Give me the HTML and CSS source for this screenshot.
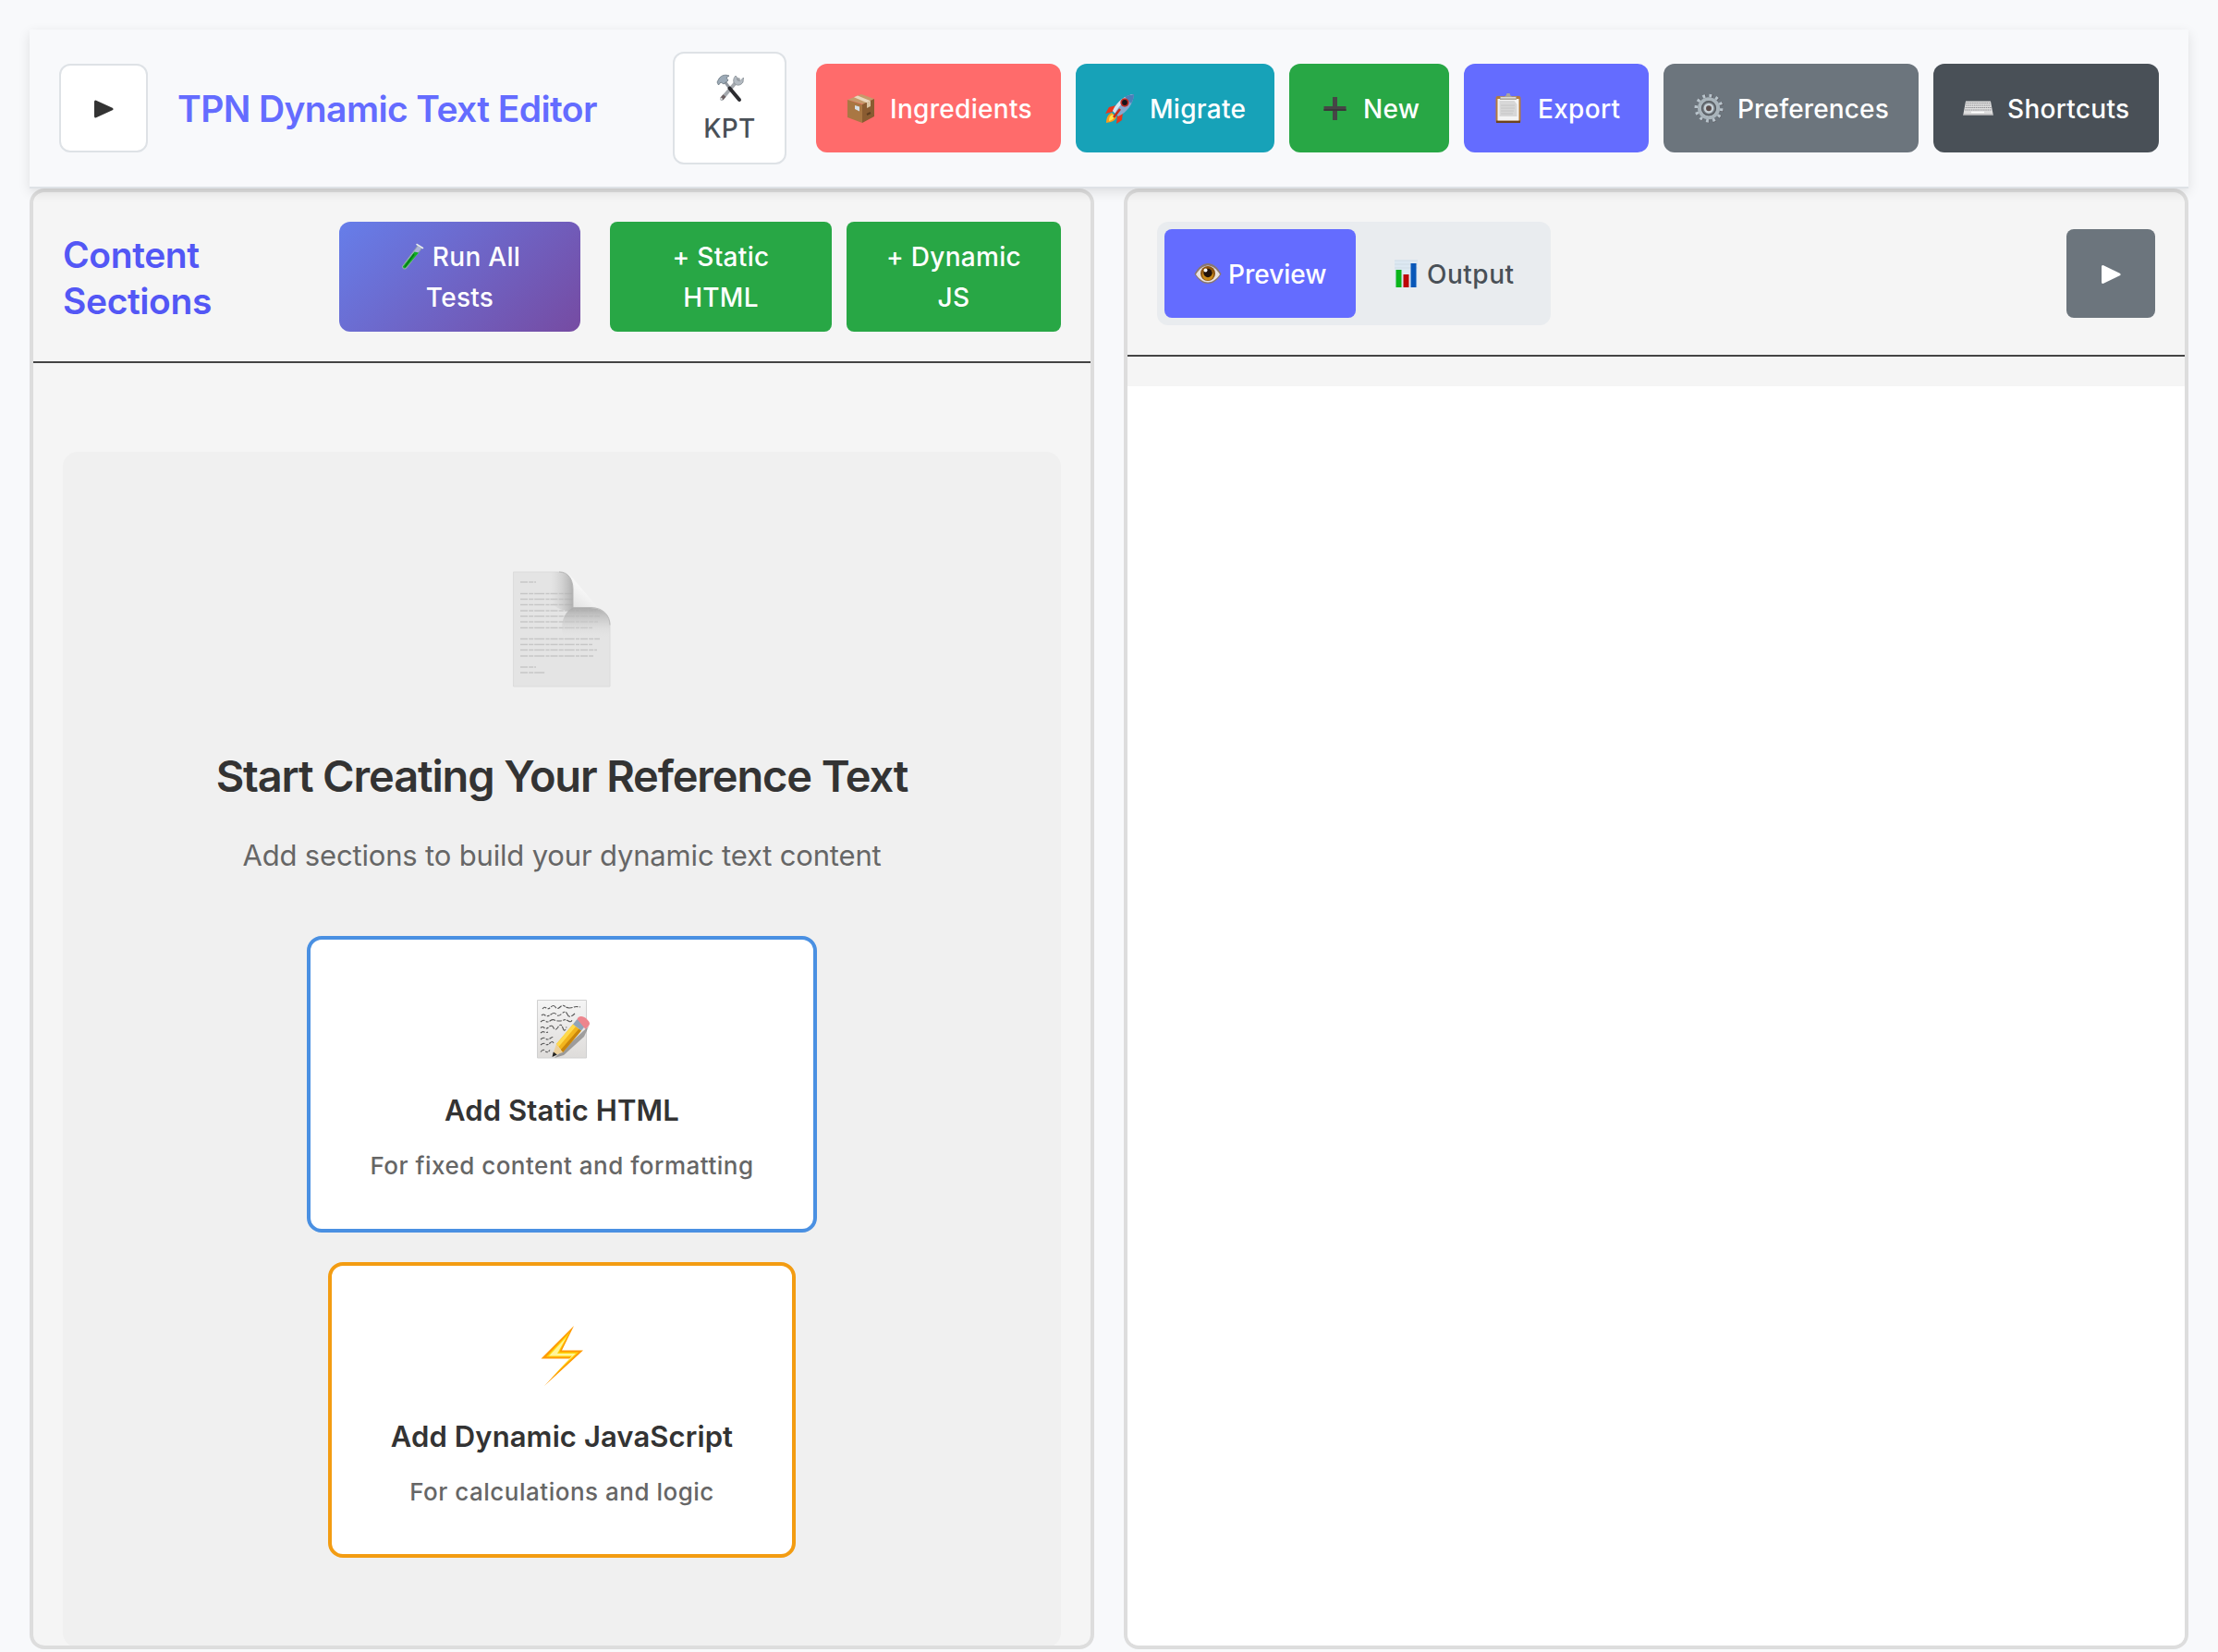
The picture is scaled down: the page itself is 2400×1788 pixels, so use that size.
FILE: index.html
```html
<!DOCTYPE html>
<html lang="en">
<head>
<meta charset="utf-8">
<title>TPN Dynamic Text Editor</title>
<link rel="stylesheet" href="styles.css">
</head>
<body>
<header class="navbar">
  <button class="toggle"><svg width="22" height="20" viewBox="0 0 22 20"><path d="M2.500 2v16L20 10z" fill="#333" stroke="#333" stroke-width="3" stroke-linejoin="round"/></svg></button>
  <h1 class="title">TPN Dynamic Text Editor</h1>
  <button class="kpt">
    <span class="line"><svg width="32" height="32" viewBox="0 0 32 32"><path d="M25 7L7 28" stroke="#a5a9ae" stroke-width="4" stroke-linecap="round"/><path d="M7 28l3-3.500" stroke="#6d6264" stroke-width="4"/><circle cx="6.500" cy="28" r="1.200" fill="#ddd"/><path d="M22 3c-3 3-3 7-.5 9s6 1.500 8.500-2l.5-5-3.500 3.500-3-.6-.5-3.200z" fill="#b3bac1" stroke="#7c848b" stroke-width=".7"/><path d="M10 9l6 8" stroke="#9298a0" stroke-width="3"/><path d="M15.500 16.500L26 29" stroke="#2c2c30" stroke-width="4" stroke-linecap="round"/><path d="M2 10l2-4c3-4 7-4.500 11-3l-3 2 2 3-5 4-3-2-2.500 3z" fill="#9caab7" stroke="#68737e" stroke-width=".8"/></svg></span>
    <span class="line">KPT</span>
  </button>
  <nav class="actions">
    <button class="btn ingredients"><svg width="33" height="33" viewBox="0 0 33 33"><path d="M2 7L17 1l14 5-11 6z" fill="#c69a6b"/><path d="M2 7l16 5v20L2 26z" fill="#a97743"/><path d="M18 12l13-6v19L18 32z" fill="#8a5c31"/><path d="M9 4.200l4-1.600 14 5.600-4 2z" fill="#ead7bd"/><path d="M23 10l4-2v6l-4 2z" fill="#d9c2a1"/><path d="M10 13l5 1.500v5L10 17z" fill="#d7e0e6"/><path d="M23 23l4-2" stroke="#5d3c1f" stroke-width="2"/></svg><span>Ingredients</span></button>
    <button class="btn migrate"><svg width="33" height="33" viewBox="0 0 33 33"><path d="M12 13L4 15l-4 7 8-2zM19 20l-1 9-6 4 1-9z" fill="#e8371c"/><path d="M7 21l5 5c-2 4-5 5-11 6 0-6 2-9 6-11z" fill="#ff9c1a"/><path d="M8 23l2 2c-1 3-3 4-6 5 0-4 1-6 4-7z" fill="#ffe94a"/><path d="M31 1C22 2 13 8 8 19l6 6C24 20 30 12 31 1z" fill="#86a9cf"/><path d="M31 1C22 2 13 8 8 19l2.500 2.500C16 12 22 6 31 1z" fill="#d7e5f2"/><path d="M31 1c-4 .4-7 1.300-10 3l7 7c1.800-3 2.700-6 3-10z" fill="#4b7fb8"/><circle cx="21" cy="10" r="4.700" fill="#c02a24"/><circle cx="21" cy="10" r="2.900" fill="#16131a"/><path d="M16 17l-7 9" stroke="#c92a18" stroke-width="2.500"/></svg><span>Migrate</span></button>
    <button class="btn new"><svg width="33" height="33" viewBox="0 0 33 33"><path d="M15 4h5v10h9.500v5H20v10h-5V19H5.500v-5H15z" fill="#464646"/><path d="M5.500 17H29.500v2H5.500z" fill="#393939"/></svg><span>New</span></button>
    <button class="btn export"><svg width="33" height="33" viewBox="0 0 33 33"><rect x="2.500" y="3" width="27" height="29" rx="2" fill="#b27b3e"/><path d="M3 29.500h26V32H3z" fill="#6d431c"/><path d="M4.500 6h23v23.500h-23z" fill="#f4f4f4"/><path d="M6.500 8h16l3 4v13h-19z" fill="#d7d7d7"/><path d="M8 13h15M8 16h15M8 19h14M8 22h13" stroke="#c4c4c4"/><path d="M7 3.500h5c1-1 2-1 2-2a2 2 0 014 0c0 1 1 1 2 2h5v3.500H7z" fill="#a9a59d"/><path d="M8 4h16v1.500H8z" fill="#dedbd3"/></svg><span>Export</span></button>
    <button class="btn preferences"><svg width="33" height="33" viewBox="0 0 33 33"><circle cx="17.500" cy="16.500" r="13.700" fill="none" stroke="#5b5a60" stroke-width="4" stroke-dasharray="3.300 3.874"/><circle cx="17" cy="16.200" r="13.700" fill="none" stroke="#b8c4cc" stroke-width="3.600" stroke-dasharray="2.900 4.274"/><circle cx="17" cy="16.200" r="10" fill="#747c83" stroke="#a9b4bb" stroke-width="4"/><circle cx="17" cy="16.200" r="7.500" fill="none" stroke="#55595e" stroke-width="1.200"/><circle cx="17" cy="16.200" r="4.200" fill="#5a4d4c" stroke="#c6d0d6" stroke-width="2.500"/></svg><span>Preferences</span></button>
    <button class="btn shortcuts"><svg width="33" height="33" viewBox="0 0 33 33"><path d="M3 8.500h27l2.500 13.500v2H.5v-2z" fill="#dedede"/><path d="M.5 22.500h32V24H.5z" fill="#a9a9ac"/><path d="M3.500 10.500h26M3.200 13h26.800M2.700 15.500h28M2.300 18h29" stroke="#8e8e92" stroke-width="1.200" stroke-dasharray="1.500 .7"/><path d="M9 20.500h14" stroke="#fff" stroke-width="1.500"/></svg><span>Shortcuts</span></button>
  </nav>
</header>
<main class="workspace">
  <section class="panel">
    <div class="panel-head sections-head">
      <h2 class="panel-title">Content<br>Sections</h2>
      <button class="wrap run"><span class="line"><svg class="tube" width="28" height="30" viewBox="0 0 28 30"><path d="M20 3l4.500 2.500L7.500 27.500c-1.500 1.500-5 0-4-2.500z" fill="#d5dfe0" fill-opacity=".6" stroke="#93a3a6"/><path d="M16.500 9.500l4.500 1L7 27c-1.300 1-3.500 0-3-1.700z" fill="#0faf25"/><path d="M16 12L6 26" stroke="#087a16" stroke-width="1.500"/><path d="M19 1.500l6.500 4" stroke="#e6ecec" stroke-width="1.500" stroke-linecap="round"/></svg>Run All</span><span class="line">Tests</span></button>
      <button class="wrap static"><span class="line">+ Static</span><span class="line">HTML</span></button>
      <button class="wrap dynamic"><span class="line">+ Dynamic</span><span class="line">JS</span></button>
    </div>
    <div class="sections-body">
      <div class="empty">
        <svg class="doc" width="108" height="126" viewBox="0 0 108 126">
          <defs>
            <linearGradient id="fold" x1="66" y1="40" x2="80" y2="22" gradientUnits="userSpaceOnUse"><stop offset="0" stop-color="#e2e2e2"/><stop offset="1" stop-color="#f7f7f7"/></linearGradient>
            <linearGradient id="under" x1="0" y1="38" x2="0" y2="72" gradientUnits="userSpaceOnUse"><stop offset="0" stop-color="#a6a6a6"/><stop offset=".5" stop-color="#c6c6c6" stop-opacity=".6"/><stop offset="1" stop-color="#e2e2e2" stop-opacity="0"/></linearGradient>
            <linearGradient id="left" x1="42" y1="0" x2="67" y2="0" gradientUnits="userSpaceOnUse"><stop offset="0" stop-color="#ccc" stop-opacity="0"/><stop offset="1" stop-color="#a6a6a6" stop-opacity=".9"/></linearGradient>
          </defs>
          <path d="M1.500 1h49.500c10 0 15 8 15 19v20h19c14 0 21 9 21 19v66H1.500z" fill="#e4e4e4" stroke="#dcdcdc"/>
          <path d="M9 12h17M9 24.500h56M9 30.500h57M9 36.500h57M9 43h82M9 49h86M9 55h84M9 61.500h78M9 73.500h86M9 79.500h78M9 85.500h83M9 92h79M9 104h17M9 110h27" stroke="#c6c6c6" stroke-width="1.700" stroke-dasharray="8 1.200 5 1 11 1.300 4 1"/>
          <path d="M40 1h11c10 0 15 8 15 19v22c-8 2-16 0-22-6z" fill="url(#left)"/>
          <path d="M66 40h19c14 0 21 9 21 19v14H56c-4-12-2-28 10-33z" fill="url(#under)"/>
          <path d="M51 1c7 0 11 3 15 7l29 34c-3-2-6-2.500-10-2.500H66V20C66 9 61 1 51 1z" fill="url(#fold)"/>
          <path d="M66 40V20C66 9 61 1 51 1M66 39.500h19c14 0 21 9 21 19" fill="none" stroke="#b4b4b4" stroke-width=".9"/>
        </svg>
        <h3 class="empty-title">Start Creating Your Reference Text</h3>
        <p class="empty-text">Add sections to build your dynamic text content</p>
        <div class="choices">
          <button class="choice choice-static">
            <svg width="60" height="72" viewBox="0 0 60 72"><defs><linearGradient id="paper" x1="0" y1="0" x2="0" y2="1"><stop offset="0" stop-color="#f5f5f5"/><stop offset="1" stop-color="#dedcda"/></linearGradient></defs><path d="M3.500 5.500h53v62.500h-53z" fill="url(#paper)" stroke="#d0d0d0"/><g fill="none" stroke="#555" stroke-width="1.100" stroke-dasharray="5 1.500 3 1 7 1.500"><path d="M9 15q2-3 4-1t5-1 5 0 5 0 5-1 5 2 5-1 7 0M8 22q2-2 4 0t6-1 6 0 6-1 6 1 8-1M7 29q3-3 5-1t5 0 5-1 5 1 5-1 5 1 4-1M7 35.500q2-2 4 0t5-1 5 1 5-1 5 1 4-1M7 41q2-2 4-1t4 0M7 48q3-3 5-1t5 0 3-1M7 54q3-3 5-1t5-1 4 0M7 61.500q3-4 5-1t5-1"/></g><path d="M24 66l29-27 6-5-5 11-22 20-10 3z" fill="#333" opacity=".4"/><path d="M24 53L42 31.500l9 7L31 62z" fill="#f2b51d"/><path d="M24 53L42 31.500l3 2.500L26.500 56z" fill="#ffda4c"/><path d="M48.500 36.500l2.500 2L31 62l-2.500-2.500z" fill="#c9850b"/><path d="M24 53l7 9L19.500 66z" fill="#ecd09a"/><path d="M20.800 61.500l4 3L19.500 67z" fill="#252525"/><path d="M42 31.500l4.500-5.500 9 7-4.500 5.500z" fill="#91a4b8"/><path d="M46.500 26c1.500-4.500 7-3.500 10-.5s5 5 2 8.500l-3 3z" fill="#ed858d"/></svg>
            <span class="choice-title">Add Static HTML</span>
            <span class="choice-text">For fixed content and formatting</span>
          </button>
          <button class="choice choice-dynamic">
            <svg width="48" height="72" viewBox="0 0 48 72"><path d="M37 5L1.500 40.500h31L5 70l42-38.500H24z" fill="#ff9a00"/><path d="M33 11L7 38.500h28L12 62l30-28.500H21z" fill="#ffd60a"/><path d="M29 17L10 37.500h25L17 56l22-21H19z" fill="#fff59a"/></svg>
            <span class="choice-title">Add Dynamic JavaScript</span>
            <span class="choice-text">For calculations and logic</span>
          </button>
        </div>
      </div>
    </div>
  </section>
  <section class="panel">
    <div class="panel-head preview-head">
      <div class="tabs">
        <button class="tab tab-preview"><svg width="30" height="30" viewBox="0 0 30 30"><path d="M.5 15.500C5 7.500 10 4 15 4s10 3.500 14.500 11.500C25 23 20 26 15 26S5 23 .5 15.500z" fill="#8a7770"/><path d="M2 16C6 10 10 6.500 15 6.500S24 10 28 16c-4 5.500-8 8.500-13 8.500S6 21.500 2 16z" fill="#e9e2df"/><circle cx="15" cy="15" r="8" fill="#8c5410"/><circle cx="15" cy="16.500" r="6" fill="#c98a19"/><circle cx="15" cy="14.500" r="4.700" fill="#20120c"/><circle cx="12.500" cy="11.500" r="2" fill="#fff"/></svg><span>Preview</span></button>
        <button class="tab tab-output"><svg width="30" height="30" viewBox="0 0 30 30"><path d="M2 .5h25v29.500H2z" fill="#dce8f2"/><path d="M2 1h25M2 5h25M2 9h25" stroke="#cbd7e1" stroke-width=".7"/><path d="M3.500 11H9.500v19h-6z" fill="#0bb51b"/><path d="M11.500 16h6v14h-6z" fill="#bd0808"/><path d="M19.500 4h6v26h-6z" fill="#0857b8"/></svg><span>Output</span></button>
      </div>
      <button class="play"><svg width="22" height="22" viewBox="0 0 22 22"><path d="M2.500 2.500v17L20 11z" fill="#fff" stroke="#fff" stroke-width="3" stroke-linejoin="round"/></svg></button>
    </div>
    <div class="preview-body"></div>
  </section>
</main>
</body>
</html>
```
FILE: styles.css
```css
* { box-sizing: border-box; margin: 0; padding: 0; }
body {
  height: 1788px;
  padding: 32px 32px 0;
  overflow: hidden;
  background: #f8f9fb;
  color: #333;
  font-family: Inter, "Liberation Sans", sans-serif;
}
button {
  border: 0;
  font: 500 28px/44px Inter, "Liberation Sans", sans-serif;
  letter-spacing: .3px;
  color: #fff;
  white-space: nowrap;
}
svg { display: block; flex: none; }

.navbar {
  position: relative;
  z-index: 1;
  display: flex;
  align-items: center;
  height: 172px;
  padding: 0 32px;
  background: #f8f9fb;
  border-bottom: 2px solid #dee2e6;
  box-shadow: 0 4px 12px rgba(0, 0, 0, .11);
}
.toggle {
  display: flex;
  align-items: center;
  justify-content: center;
  width: 96px;
  height: 96px;
  background: #fff;
  border: 2px solid #dee2e6;
  border-radius: 12px;
}
.toggle svg { margin-top: 2px; }
.title {
  margin-left: 32px;
  padding-top: 2px;
  font-size: 39px;
  font-weight: 600;
  line-height: 50px;
  letter-spacing: -.6px;
  color: #646cff;
}
.kpt {
  width: 123px;
  height: 122px;
  margin-left: auto;
  background: #fff;
  border: 2px solid #dee2e6;
  border-radius: 12px;
  color: #495057;
}
.line { display: flex; align-items: center; justify-content: center; height: 44px; }
.actions { display: flex; gap: 16px; margin-left: 32px; }
.btn { display: flex; align-items: center; gap: 15px; height: 96px; padding-left: 32px; border-radius: 12px; }
.btn span, .tab span { padding-top: 2px; }
.ingredients { width: 265px; background: #ff6b6b; }
.migrate { width: 215px; background: #17a2b8; }
.new { width: 173px; background: #28a745; }
.export { width: 200px; background: #646cff; }
.preferences { width: 276px; background: #6c757d; letter-spacing: .15px; }
.shortcuts { width: 244px; background: #495057; }

.workspace { display: grid; grid-template-columns: 1152px 1152px; gap: 32px; height: 1581px; }
.panel {
  display: flex;
  flex-direction: column;
  overflow: hidden;
  background: #f5f5f5;
  border: 4px solid #ddd;
  border-radius: 16px;
}
.panel-head { display: flex; align-items: center; flex: none; padding: 0 32px; border-bottom: 2px solid #444; }
.sections-head { height: 185px; }
.panel-title {
  padding-top: 2px;
  font-size: 39px;
  font-weight: 600;
  line-height: 50px;
  letter-spacing: -.4px;
  color: #5357f5;
}
.wrap { height: 119px; border-radius: 8px; }
.run { width: 261px; margin: 0 32px 0 auto; border-radius: 12px; background: linear-gradient(135deg, #667eea, #764ba2); }
.tube { margin-right: 8px; }
.static { width: 240px; margin-right: 16px; background: #28a745; }
.dynamic { width: 232px; background: #28a745; }

.sections-body { padding: 96px 32px 0; }
.empty {
  display: flex;
  flex-direction: column;
  align-items: center;
  height: 1294px;
  padding-top: 129px;
  background: #f0f0f0;
  border-radius: 16px;
}
.empty-title { margin-top: 68px; font-size: 47px; font-weight: 600; line-height: 56px; letter-spacing: -1.15px; }
.empty-text { margin-top: 38px; font-size: 31px; line-height: 40px; letter-spacing: -.17px; color: #666; }
.choices { display: flex; flex-direction: column; align-items: center; gap: 32px; margin-top: 67px; }
.choice {
  display: flex;
  flex-direction: column;
  align-items: center;
  height: 321px;
  padding-top: 60px;
  background: #fff;
  border: 4px solid #4a90e2;
  border-radius: 16px;
}
.choice-static { width: 552px; }
.choice-dynamic { width: 506px; height: 320px; border-color: #f39c12; }
.choice-title { margin-top: 33px; font-size: 31px; font-weight: 600; line-height: 40px; letter-spacing: .1px; color: #333; }
.choice-text { margin-top: 22px; font-size: 26px; line-height: 36px; letter-spacing: .5px; color: #666; }

.preview-head { justify-content: space-between; height: 178px; }
.tabs { display: flex; gap: 8px; width: 426px; height: 112px; padding: 8px; background: #e9ecef; border-radius: 12px; }
.tab { display: flex; align-items: center; gap: 7px; padding-left: 32px; border-radius: 8px; background: none; color: #495057; }
.tab-preview { width: 207px; background: #646cff; color: #fff; letter-spacing: 0; }
.tab-output { width: 195px; letter-spacing: .5px; }
.play { display: flex; align-items: center; justify-content: center; width: 96px; height: 96px; background: #6c757d; border-radius: 8px; }
.play svg { margin-top: 2px; }
.preview-body { flex: 1; margin-top: 32px; background: #fff; }
```
